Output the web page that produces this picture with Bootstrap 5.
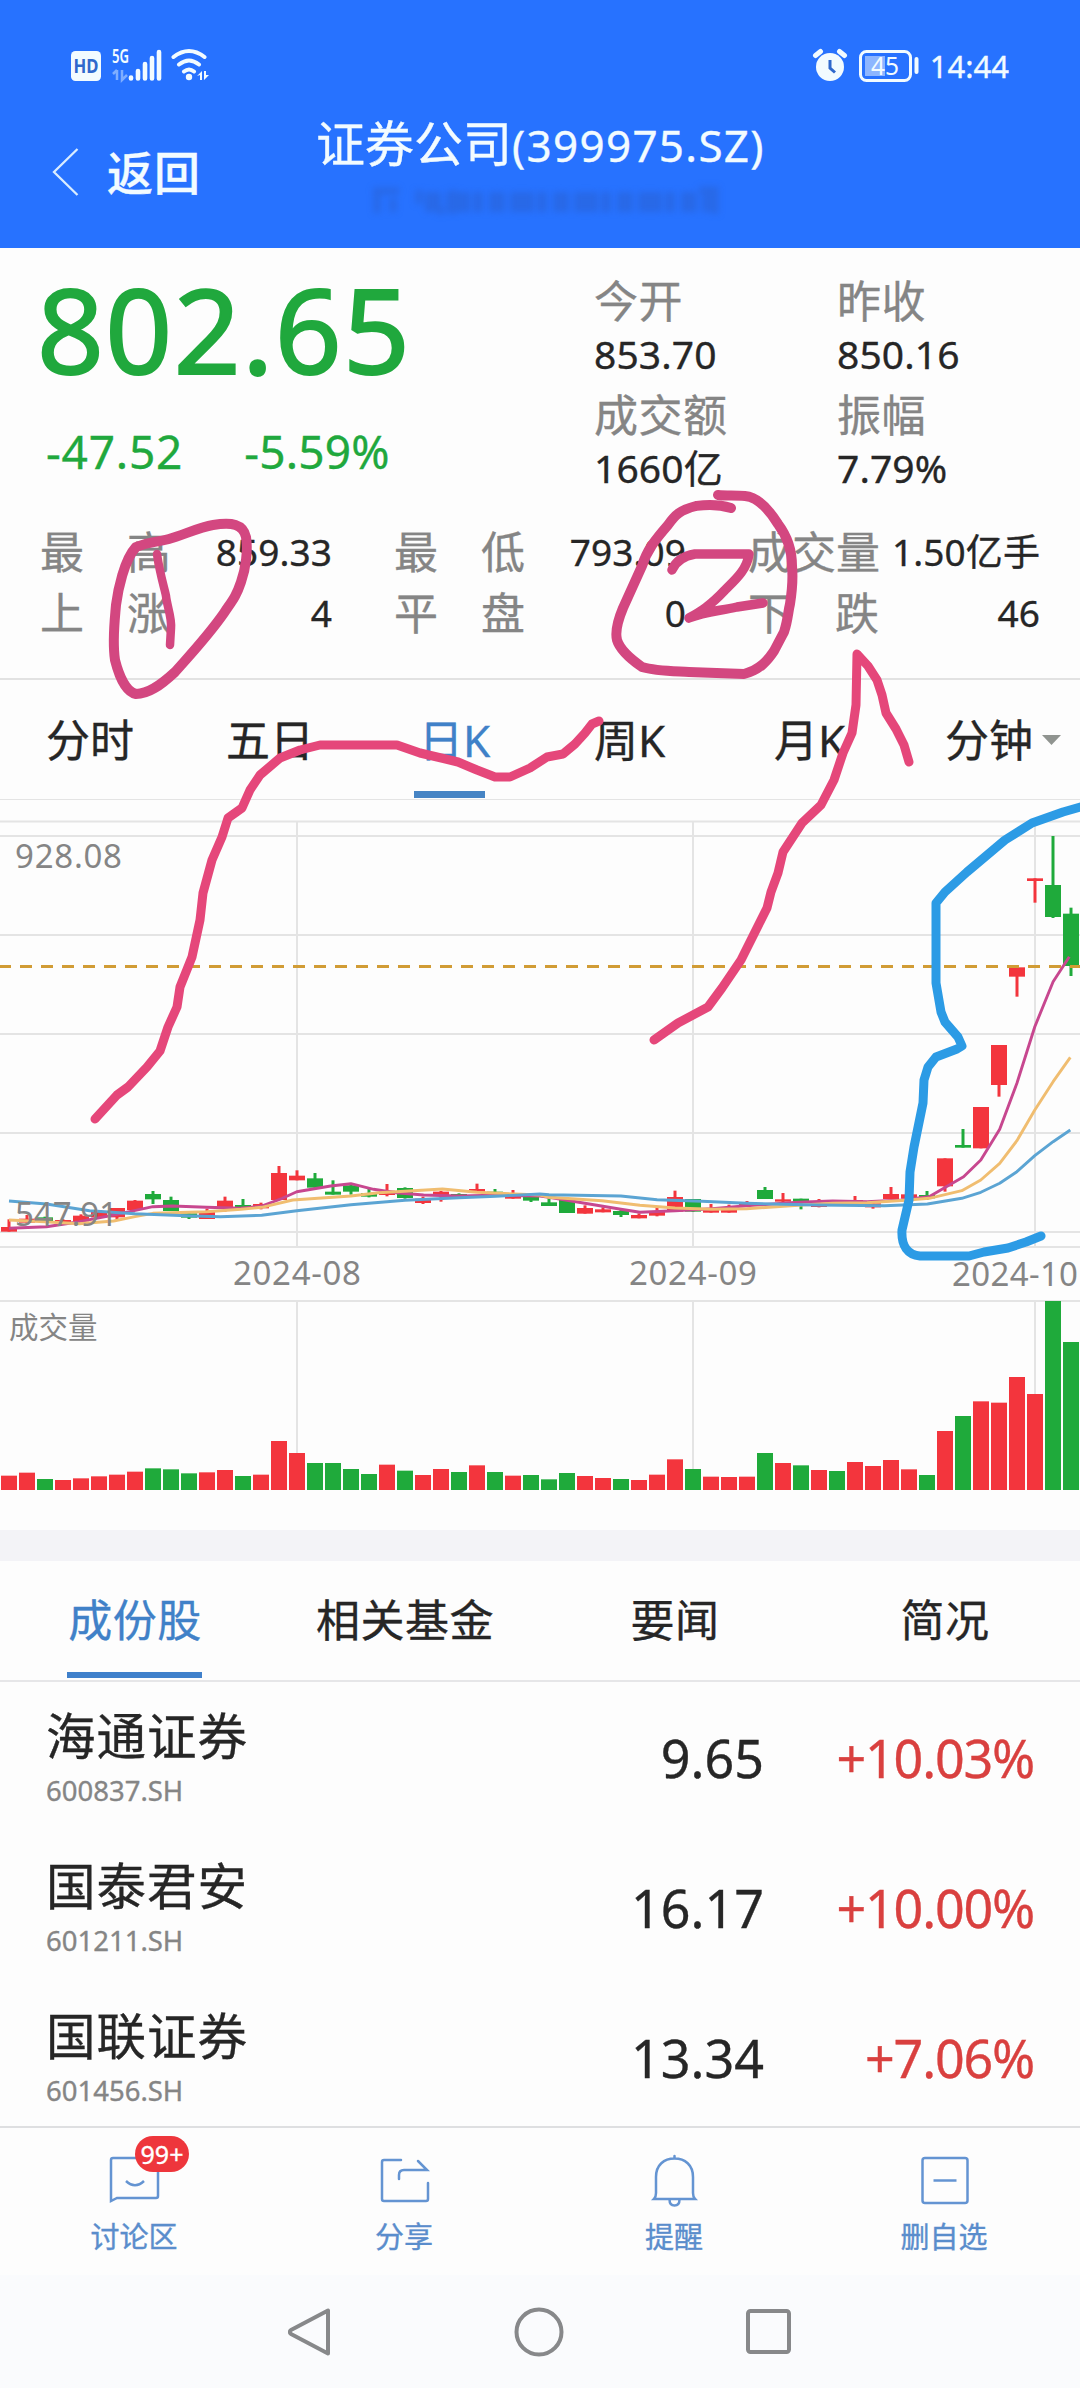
<!DOCTYPE html>
<html lang="zh-CN">
<head>
<meta charset="utf-8">
<meta name="viewport" content="width=device-width, initial-scale=1">
<title>证券公司(399975.SZ)</title>
<link href="https://cdn.jsdelivr.net/npm/bootstrap@5.3.0/dist/css/bootstrap.min.css" rel="stylesheet">
<style>
body{font-family:"Noto Sans","Noto Sans CJK SC",sans-serif;background:#fdfdfd;color:#262626;width:1080px;overflow-x:hidden;-webkit-text-stroke:.35px currentColor}
.screen{height:2388px;overflow:hidden}
.screen>*{flex-shrink:0}
svg{display:block;flex:none}
svg text{-webkit-text-stroke:0}
.top-area{height:248px;background:#2772ff;color:#f2fbff}
.status-row{height:132px;padding:0 71px}
.status-row .clock{font-size:31px;line-height:40px}
.title-row{height:116px;padding-left:52px}
.back-link{margin-top:15px;height:50px;width:264px;font-size:46px;line-height:50px;letter-spacing:1px;font-weight:500}
.head-title{font-size:49px;line-height:50px;margin-top:-14px}
.head-title .code-part{font-size:44px;letter-spacing:1.3px}
.up{color:#d9403f}.down{color:#20a83d}
.quote{height:260px;padding-left:40px}
.last-price{font-size:117px;line-height:120px;margin-top:21px;margin-left:-3px;width:557px;letter-spacing:1.4px;-webkit-text-stroke:2px currentColor}
.delta{font-size:46px;line-height:60px;margin-top:32px;gap:61px;padding-left:6px;letter-spacing:.8px}
.delta span:last-child{letter-spacing:.2px}
.facts{padding-top:23px;width:246px}
.lab{font-size:44px;color:#858585;line-height:60px}
.facts .lab{letter-spacing:.5px}
.val{font-size:39px;line-height:46px;letter-spacing:.1px}
.facts .val{margin-bottom:8px}
.facts .val,.facts .lab{position:relative}
.stats{height:170px;padding:13px 40px 0;column-gap:63px}
.stats .line{height:61px;width:291px}
.stats .lab{width:131px}
.stats .val{font-size:37px;margin-right:-1px;white-space:nowrap}
.periods{height:122px;border-top:2px solid #e2e2e2;border-bottom:1px solid #e4e4e4;font-size:44px;padding-left:46px;line-height:60px;padding-top:30px}
.periods .nav-link,.sections .nav-link{padding:0;color:#262626;position:relative;white-space:nowrap}
.periods .nav-link.active,.sections .nav-link.active{color:#4081c8}
.periods .active::after{content:"";position:absolute;left:-5px;width:71px;top:81px;height:7px;background:#4684c4}
.band{height:31px;background:#f3f3f7}
.sections{height:121px;border-bottom:2px solid #e6e6e8;font-size:44px;line-height:60px;letter-spacing:.5px}
.sections .nav-link{padding-top:29px}
.sections .active::after{content:"";position:absolute;left:67px;width:135px;top:111px;height:6px;background:#3f80cb}
.stock{height:150px;padding:24px 46px 0}
.stock .nm{font-size:49.500px;line-height:60px;letter-spacing:1px}
.stock .cd{font-size:27.500px;line-height:36px;color:#858585;margin-top:7px}
.stock .px,.stock .pc{font-size:52px;line-height:60px;margin-top:22px;text-align:right}
.stock .px{width:200px}.stock .pc{width:270px;letter-spacing:-1.200px}
.stocks{height:444px;overflow:hidden}
.tools{height:149px;border-top:2px solid #dedfe1;color:#5a8dcc;font-size:29px;line-height:40px;background:#fdfdfd}
.tools .tool{padding-top:23px;gap:10px}
.tools .tool>span:last-child{margin-left:-2px}
.tools .count{position:absolute;left:135px;top:8px;width:54px;height:36px;background:#ee363c;color:#fff;font-size:25px;line-height:36px;border-radius:18px;font-weight:400;padding:0}
.keys{height:113px;background:#fafbfd;padding:0 288px}
.ink{position:absolute;left:0;top:0;pointer-events:none}
</style>
</head>
<body>
<div class="screen position-relative d-flex flex-column">
<header class="top-area">
  <div class="status-row d-flex justify-content-between align-items-center">
    <svg width="150" height="44" viewBox="71 44 150 44" fill="#f2fbff">
      <rect x="71" y="51" width="30" height="30" rx="4.500"/>
      <text x="86" y="73" font-size="19" font-weight="700" text-anchor="middle" fill="#2f68cc" textLength="25" lengthAdjust="spacingAndGlyphs">HD</text>
      <text x="112" y="63" font-size="19" font-weight="600" textLength="17" lengthAdjust="spacingAndGlyphs">5G</text>
      <path d="M117 70v10M113 74l4-4M122 70v10l5-5" fill="none" stroke="#7faeff" stroke-width="2.500"/>
      <g stroke="#f2fbff" stroke-width="4.600" stroke-linecap="round" fill="none">
        <path d="M131 77.500v1M138 71v7.500M145 64v14.500M152 58v20.500M159 52v26.500"/>
        <path d="M173.500 57q15.500-12 31 0M179 64.500q10-8 20 0M184 71.500q5-4 10 0" stroke-width="4"/>
      </g>
      <circle cx="189" cy="77" r="3.200"/>
      <path d="M197 76l5-5v9h-2v-5zM204 71v9l5-5h-3v-4z"/>
    </svg>
    <div class="d-flex align-items-center">
      <svg width="118" height="44" viewBox="811 44 118 44" fill="#f2fbff">
        <circle cx="829" cy="67" r="14"/>
        <path d="M814.500 55.500l5-4M843.500 55.500l-5-4" stroke="#f2fbff" stroke-width="5" stroke-linecap="round"/>
        <path d="M829 60v8l5 4.500" fill="none" stroke="#2f68cc" stroke-width="3"/>
        <rect x="859.500" y="51.500" width="50" height="29" rx="6" fill="none" stroke="#f2fbff" stroke-width="3"/>
        <rect x="864" y="56" width="20" height="20" fill="#8db6ff"/>
        <rect x="913.500" y="57" width="4" height="17" rx="2"/>
        <text x="884" y="74.500" font-size="24.500" text-anchor="middle">45</text>
      </svg>
      <span class="clock">14:44</span>
    </div>
  </div>
  <div class="title-row d-flex align-items-start">
    <div class="back-link d-flex align-items-center gap-4">
      <svg width="27" height="50" viewBox="0 0 27 50"><path d="M25.500 2L2 25l23.500 23" fill="none" stroke="#d9ecff" stroke-width="2.300"/></svg><span class="ms-1">返回</span>
    </div>
    <div>
      <div class="head-title text-nowrap">证券公司<span class="code-part">(399975.SZ)</span></div>
      <svg width="450" height="54" viewBox="317 176 450 54" style="filter:blur(3px)">
        <g stroke="#2a60d0" fill="none" opacity=".5"><path d="M374 197h26M378 197v22M394 204v14M420 196v14M432 202l12 18M454 196v24M700 196h16v24" stroke-width="7"/><path d="M426 208H712" stroke-width="20" stroke-dasharray="16 5 24 3 10 6"/></g>
      </svg>
    </div>
  </div>
</header>

<section class="quote d-flex">
  <div class="down">
    <div class="last-price">802.65</div>
    <div class="delta d-flex"><span>-47.52</span><span>-5.59%</span></div>
  </div>
  <div class="facts"><div class="lab">今开</div><div class="val">853.70</div><div class="lab">成交额</div><div class="val">1660亿</div></div>
  <div class="facts"><div class="lab">昨收</div><div class="val">850.16</div><div class="lab">振幅</div><div class="val">7.79%</div></div>
</section>

<section class="stats d-flex">
  <div>
    <div class="line d-flex justify-content-between align-items-center"><span class="lab d-flex justify-content-between"><i class="fst-normal">最</i><i class="fst-normal">高</i></span><span class="val">859.33</span></div>
    <div class="line d-flex justify-content-between align-items-center"><span class="lab d-flex justify-content-between"><i class="fst-normal">上</i><i class="fst-normal">涨</i></span><span class="val">4</span></div>
  </div>
  <div>
    <div class="line d-flex justify-content-between align-items-center"><span class="lab d-flex justify-content-between"><i class="fst-normal">最</i><i class="fst-normal">低</i></span><span class="val">793.09</span></div>
    <div class="line d-flex justify-content-between align-items-center"><span class="lab d-flex justify-content-between"><i class="fst-normal">平</i><i class="fst-normal">盘</i></span><span class="val">0</span></div>
  </div>
  <div>
    <div class="line d-flex justify-content-between align-items-center"><span class="lab text-nowrap">成交量</span><span class="val">1.50亿手</span></div>
    <div class="line d-flex justify-content-between align-items-center"><span class="lab d-flex justify-content-between"><i class="fst-normal">下</i><i class="fst-normal">跌</i></span><span class="val">46</span></div>
  </div>
</section>

<nav class="periods nav flex-nowrap">
  <a class="nav-link" style="width:180px">分时</a>
  <a class="nav-link" style="width:193px">五日</a>
  <a class="nav-link active" style="width:175px">日K</a>
  <a class="nav-link" style="width:180px">周K</a>
  <a class="nav-link" style="width:171px">月K</a>
  <a class="nav-link d-flex align-items-center" style="height:60px">分钟<svg class="ms-2" width="22" height="12" viewBox="0 0 22 12"><path d="M1 1h19l-9.500 10z" fill="#909490"/></svg></a>
</nav>

<svg id="chart" width="1080" height="730" viewBox="0 800 1080 730"></svg>
<div class="band"></div>

<nav class="sections nav nav-fill flex-nowrap">
  <a class="nav-link active w-25">成份股</a><a class="nav-link w-25">相关基金</a><a class="nav-link w-25">要闻</a><a class="nav-link w-25">简况</a>
</nav>
<section class="stocks">
  <div class="stock d-flex"><div class="flex-grow-1"><div class="nm">海通证券</div><div class="cd">600837.SH</div></div><div class="px">9.65</div><div class="pc up">+10.03%</div></div>
  <div class="stock d-flex"><div class="flex-grow-1"><div class="nm">国泰君安</div><div class="cd">601211.SH</div></div><div class="px">16.17</div><div class="pc up">+10.00%</div></div>
  <div class="stock d-flex"><div class="flex-grow-1"><div class="nm">国联证券</div><div class="cd">601456.SH</div></div><div class="px">13.34</div><div class="pc up">+7.06%</div></div>
</section>

<section class="tools d-flex">
  <div class="tool w-25 position-relative d-flex flex-column align-items-center">
    <svg width="60" height="56" viewBox="105 2150 60 56" fill="none" stroke="#6494d2" stroke-width="2.500"><path d="M111 2200v-41q0-2 2-2h43q2 0 2 2v36q0 2-2 2h-39zM126 2180q9 8.500 18 0"/></svg>
    <span class="badge count">99+</span><span>讨论区</span>
  </div>
  <div class="tool w-25 d-flex flex-column align-items-center">
    <svg width="60" height="56" viewBox="375 2150 60 56" fill="none" stroke="#6494d2" stroke-width="2.500" stroke-linecap="round"><path d="M401 2159h-17q-2 0-2 2v37q0 2 2 2h42q2 0 2-2v-16M399 2178v-4q0-5 5-5h23l-9-9"/></svg>
    <span>分享</span>
  </div>
  <div class="tool w-25 d-flex flex-column align-items-center">
    <svg width="60" height="56" viewBox="645 2150 60 56" fill="none" stroke="#6494d2" stroke-width="2.500" stroke-linecap="round"><path d="M674.500 2155v2.500M656 2192v-16c0-12 8-18.500 18.500-18.500s18.500 6.500 18.500 18.500v16q0 4 2 6h-41q2-2 2-6zM669.500 2198.500q0 6 5 6t5-6"/></svg>
    <span>提醒</span>
  </div>
  <div class="tool w-25 d-flex flex-column align-items-center">
    <svg width="60" height="56" viewBox="915 2150 60 56" fill="none" stroke="#6494d2" stroke-width="2.500"><rect x="922.500" y="2157" width="45" height="45" rx="2.500"/><path d="M933.500 2179.500h23"/></svg>
    <span>删自选</span>
  </div>
</section>
<footer class="keys d-flex justify-content-between align-items-center">
  <svg width="44" height="50" viewBox="0 0 44 50"><path d="M40 3.500v43L3 27q-2.500-2 0-4z" fill="none" stroke="#87888a" stroke-width="4" stroke-linejoin="round"/></svg>
  <svg width="50" height="50" viewBox="0 0 50 50"><circle cx="25" cy="25" r="22.500" fill="none" stroke="#87888a" stroke-width="4"/></svg>
  <svg width="46" height="50" viewBox="0 0 46 50"><rect x="2" y="4" width="41" height="41" rx="2.500" fill="none" stroke="#87888a" stroke-width="4"/></svg>
</footer>

<svg class="ink" width="1080" height="2388" viewBox="0 0 1080 2388" fill="none" stroke-linecap="round" stroke-linejoin="round">
  <g stroke="#d34780" stroke-width="10">
    <path d="M136 547C150 541 155 543 169 539S200 527 213 525C232 522 243 524 246 537C248 550 246 568 241 582C236 597 232 601 224 613C208 636 190 655 175 672C160 686 148 694 136 694C126 692 119 676 115 660C112 640 115 618 116 605C118 590 124 560 136 547"/>
    <path d="M157 554C160 575 165 590 166 596C167 606 172 618 171 628L170 645" stroke-width="8.500"/>
    <path d="M731 508C715 503 703 505 696 506C680 510 675 515 668 525C655 540 647 550 642 566L623 608C618 620 615 632 617 640C620 650 632 660 642 667C655 671 670 671 689 672L744 674C760 670 768 660 774 651L784 632C788 620 788 612 790 604C793 585 793 577 792 566C792 550 787 536 778 524C768 508 757 497 745 496C735 495 727 496 718 495"/>
    <path d="M672 570C676 560 684 556 695 554H749C747 570 735 580 725 590C710 606 700 612 689 618C705 611 720 611 737 607L763 603" stroke-width="9.500"/>
  </g>
  <g stroke="#e5477a" stroke-width="9">
    <path d="M95 1119L117 1095 128 1087 147 1067 160 1051 168 1027 177 1007 180 987 192 957 200 920 203 893 212 860 222 837 228 818 242 808 250 790 260 775 280 758 300 750 320 745H397L420 753 458 762 477 770 495 777H510L530 768 547 757 563 754 575 744 585 733 592 724 599 721"/>
    <path d="M654 1040L678 1023 708 1007 722 988 741 960 755 932 767 908 771 892 778 873 783 852 802 823 821 805 834 780 843 753 852 733 856 705 857 654 868 666 877 680 882 695 886 713 896 729 904 745 909 762"/>
  </g>
  <path d="M1084 806L1063 812 1032 823 1005 840 967 872 945 892 936 903V983L941 1012 945 1022 958 1037 962 1046 957 1049 936 1057 928 1067 924 1080 923 1103 914 1147 910 1172 909 1200 902 1230C901 1246 908 1255 920 1256H969L984 1252 1008 1248 1026 1242 1041 1236" stroke="#2c9be5" stroke-width="9"/>
</svg>
</div>
<script src="https://cdn.jsdelivr.net/npm/bootstrap@5.3.0/dist/js/bootstrap.bundle.min.js"></script>
<script>
// Each record: direction, body top, body bottom, wick top, wick bottom, volume top (thirds of a pixel below y=1120)
const days = [
['r',321,335,298,335,1067],['r',296,308,285,308,1058],['g',292,305,290,308,1077],['r',300,308,298,308,1080],['r',287,304,283,304,1075],
['r',275,292,272,292,1069],['r',264,292,264,298,1064],['r',242,270,240,270,1055],['g',222,238,213,252,1045],['g',240,273,230,273,1048],
['g',280,293,280,297,1060],['r',276,297,266,297,1057],['r',242,262,230,275,1050],['g',255,263,237,268,1068],['r',252,265,248,268,1064],
['r',159,240,138,240,963],['r',167,181,151,181,999],['g',175,203,159,203,1029],['g',215,224,181,224,1029],['g',196,215,190,224,1047],
['g',219,230,207,232,1062],['r',212,225,192,229,1034],['g',204,234,202,236,1052],['r',236,249,230,252,1065],['r',215,228,213,245,1047],
['g',222,232,220,236,1056],['r',207,217,191,217,1036],['g',215,222,207,224,1056],['r',224,236,210,236,1067],['g',222,242,220,246,1065],
['g',247,258,235,258,1078],['g',240,279,238,279,1059],['r',264,281,256,281,1068],['r',268,277,262,277,1074],['g',273,285,270,291,1077],
['r',285,295,280,295,1080],['r',275,287,264,289,1064],['r',231,275,212,275,1018],['g',237,275,237,275,1047],['r',270,278,252,278,1070],
['r',270,278,254,278,1071],['r',250,258,243,260,1070],['g',210,237,201,237,999],['r',238,245,219,250,1029],['g',236,245,236,268,1036],
['r',252,261,237,262,1050],['g',246,252,244,254,1053],['r',240,247,228,250,1026],['r',250,262,240,266,1038],['r',222,237,201,237,1020],
['r',223,236,220,240,1048],['g',225,235,213,240,1065],['r',115,199,115,215,933],['g',75,83,27,83,888],['r',-39,85,-39,85,844],
['r',-225,-105,-225,-70,848],['r',-458,-430,-458,-370,771],['r',-725,-717,-725,-652,822],['g',-705,-609,-852,-606,543],['g',-619,-462,-637,-432,666]];
const Y = v => 1120 + v / 3, K = 2.904;
const col = {r:'#f3353d', g:'#1faa3b'};
let s = '<g fill="none" stroke="#e4e4e4" stroke-width="2"><path d="M0 821.500H1080M0 836H1080M0 935H1080M0 1034H1080M0 1133H1080M0 1232H1080M0 1247H1080M0 1301H1080M297 821V1247M693 821V1247M1035 821V1247M297 1301V1490M693 1301V1490M1035 1301V1490"/></g>';
days.forEach((d, i) => {
  const x = 9 + 18 * i, c = col[d[0]];
  s += `<path d="M${x} ${Y(d[3])}V${Y(d[4])}" stroke="${c}" stroke-width="3"/>`;
  s += `<rect x="${x-8}" y="${Y(d[1])}" width="16" height="${(d[2]-d[1])/3}" fill="${c}"/>`;
  s += `<rect x="${x-8}" y="${Y(d[5])}" width="16" height="${(1110-d[5])/3}" fill="${c}"/>`;
});
// Moving averages: left half, then right half measured from x=540
const averages = [
['#c7478f',[26,325,135,320,230,305,330,285,390,272,444,260,500,258,600,262,700,265,760,258,820,235,862,215,960,198,1019,191,1085,208,1150,218,1230,225,1330,228,1440,226,1568,228],
 [26,232,130,250,235,268,290,277,392,272,500,266,600,257,750,247,850,243,950,245,1050,240,1130,230,1180,200,1230,170,1280,120,1335,28,1385,-110,1437,-280,1490,-415,1537,-490]],
['#f0bd70',[26,300,130,305,230,311,330,303,392,290,444,280,600,275,700,268,760,262,850,240,1019,228,1100,218,1200,212,1285,207,1385,217,1568,225],
 [26,232,180,242,290,256,392,264,500,268,600,266,750,256,850,250,950,248,1070,240,1130,235,1225,212,1280,180,1335,130,1385,62,1437,-30,1490,-115,1540,-188]],
['#5ba4d3',[26,243,135,252,260,272,392,281,540,287,640,290,760,286,862,272,1019,254,1176,241,1333,233,1440,229,1568,222],
 [26,224,235,228,340,239,470,244,600,250,800,255,1000,257,1125,252,1225,235,1280,217,1335,190,1385,155,1437,107,1490,65,1540,30]]];
for (const [c, a, b] of averages) {
  const p = [];
  for (let i = 0; i < a.length; i += 2) p.push((a[i]/K).toFixed(1) + ',' + Y(a[i+1]).toFixed(1));
  for (let i = 0; i < b.length; i += 2) p.push((540 + b[i]/K).toFixed(1) + ',' + Y(b[i+1]).toFixed(1));
  s += `<polyline points="${p.join(' ')}" fill="none" stroke="${c}" stroke-width="2.900" stroke-linejoin="round"/>`;
}
s += '<path d="M-1 966.500H1080" stroke="#d19c35" stroke-width="3" stroke-dasharray="12 9"/>';
s += '<g font-size="33" fill="#858585"><text x="15" y="868" textLength="107">928.08</text><text x="15" y="1226" textLength="103">547.91</text><text x="233" y="1285" textLength="128">2024-08</text><text x="629" y="1285" textLength="128">2024-09</text><text x="952" y="1286" textLength="126">2024-10</text><text x="9" y="1338" font-size="29.500">成交量</text></g>';
document.getElementById('chart').innerHTML = s;
</script>
</body>
</html>
